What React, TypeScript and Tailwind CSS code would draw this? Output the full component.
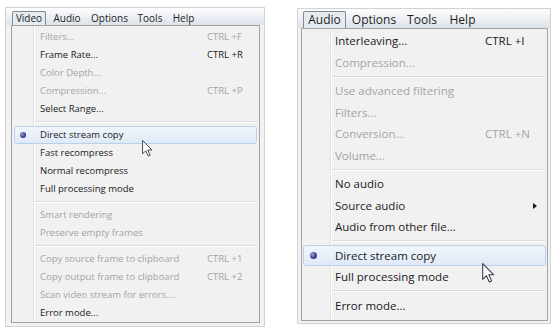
import React from "react";

type Item =
  | { type: "sep" }
  | { type: "item"; label: string; shortcut?: string; disabled?: boolean; checked?: boolean; highlight?: boolean; submenu?: boolean };

const leftItems: Item[] = [
  { type: "item", label: "Filters...", shortcut: "CTRL +F", disabled: true },
  { type: "item", label: "Frame Rate...", shortcut: "CTRL +R" },
  { type: "item", label: "Color Depth...", disabled: true },
  { type: "item", label: "Compression...", shortcut: "CTRL +P", disabled: true },
  { type: "item", label: "Select Range..." },
  { type: "sep" },
  { type: "item", label: "Direct stream copy", checked: true, highlight: true },
  { type: "item", label: "Fast recompress" },
  { type: "item", label: "Normal recompress" },
  { type: "item", label: "Full processing mode" },
  { type: "sep" },
  { type: "item", label: "Smart rendering", disabled: true },
  { type: "item", label: "Preserve empty frames", disabled: true },
  { type: "sep" },
  { type: "item", label: "Copy source frame to clipboard", shortcut: "CTRL +1", disabled: true },
  { type: "item", label: "Copy output frame to clipboard", shortcut: "CTRL +2", disabled: true },
  { type: "item", label: "Scan video stream for errors....", disabled: true },
  { type: "item", label: "Error mode..." },
];

const rightItems: Item[] = [
  { type: "item", label: "Interleaving...", shortcut: "CTRL +I" },
  { type: "item", label: "Compression...", disabled: true },
  { type: "sep" },
  { type: "item", label: "Use advanced filtering", disabled: true },
  { type: "item", label: "Filters...", disabled: true },
  { type: "item", label: "Conversion...", shortcut: "CTRL +N", disabled: true },
  { type: "item", label: "Volume...", disabled: true },
  { type: "sep" },
  { type: "item", label: "No audio" },
  { type: "item", label: "Source audio", submenu: true },
  { type: "item", label: "Audio from other file..." },
  { type: "sep" },
  { type: "item", label: "Direct stream copy", checked: true, highlight: true },
  { type: "item", label: "Full processing mode" },
  { type: "sep" },
  { type: "item", label: "Error mode..." },
];

function Cursor({ className }: { className: string }) {
  return (
    <svg className={className} viewBox="0 0 12 19" fill="none">
      <path d="M0.5 0.5 L0.5 15.5 L4 12 L6.8 18 L9 17 L6.3 11.2 L11 11.2 Z" fill="#ffffff" stroke="#333a44" strokeWidth="1" strokeLinejoin="round" />
    </svg>
  );
}

function Bullet({ className }: { className: string }) {
  return (
    <span
      className={className}
      style={{ background: "radial-gradient(circle at 35% 35%, #9aa0d8 0%, #3c4393 55%, #262a66 100%)" }}
    />
  );
}

function LeftMenu() {
  return (
    <div className="flex flex-col w-[260px] h-[320px] border border-[#d3d3d3] bg-[#f2f2f2] shrink-0">
      <div className="h-[17px] flex items-end pl-[6px] text-[10px] text-[#1e1e1e] bg-gradient-to-b from-[#fdfdfe] to-[#dde3ea]">
        <div className="h-[14px] w-[34px] justify-center flex items-center border border-b-0 border-[#7f8b97] rounded-t-[2px] bg-[#e6ebf0]">Video</div>
        <div className="h-[14px] w-[42px] justify-center flex items-center">Audio</div>
        <div className="h-[14px] w-[43px] justify-center flex items-center">Options</div>
        <div className="h-[14px] w-[38px] justify-center flex items-center">Tools</div>
        <div className="h-[14px] w-[29px] justify-center flex items-center">Help</div>
      </div>
      <div className="relative flex-1 ml-[5px] mr-[4px] mb-[3px] border border-[#a2a2a2] bg-[#f1f1f1] pt-[2px] flex flex-col text-[9.5px]">
        <div className="absolute top-0 bottom-0 left-[21px] w-[2px] border-l border-[#e2e2e2] border-r border-r-[#ffffff]" />
        {leftItems.map((it, i) =>
          it.type === "sep" ? (
            <div key={i} className="relative h-[8px] flex items-center ml-[23px] mr-[1px]">
              <div className="w-full h-[2px] border-t border-[#dcdcdc] border-b border-b-[#ffffff]" />
            </div>
          ) : (
            <div
              key={i}
              className={`relative mx-[2px] h-[18px] flex items-center pl-[25px] rounded-[3px] border ${
                it.highlight
                  ? "border-[#b9d1ec] bg-gradient-to-b from-[#f1f6fc] to-[#dfe9f6]"
                  : "border-transparent"
              } ${it.disabled ? "text-[#a4a4a4]" : "text-[#1a1a1a]"}`}
            >
              {it.checked && <Bullet className="absolute left-[5px] top-[5px] w-[6px] h-[6px] rounded-full" />}
              <span className="w-[167px] whitespace-nowrap">{it.label}</span>
              {it.shortcut && <span className="whitespace-nowrap">{it.shortcut}</span>}
            </div>
          )
        )}
        <Cursor className="absolute left-[130px] top-[114px] w-[11px] h-[17px]" />
      </div>
    </div>
  );
}

function RightMenu() {
  return (
    <div className="flex flex-col w-[254px] h-[316px] border border-[#d3d3d3] bg-[#f2f2f2] shrink-0 mt-[1px] ml-[32px]">
      <div className="h-[19px] flex items-end pl-[5px] text-[12px] text-[#1e1e1e] bg-gradient-to-b from-[#fdfdfe] to-[#dde3ea]">
        <div className="h-[17px] w-[43px] justify-center flex items-center border border-b-0 border-[#7f8b97] rounded-t-[2px] bg-[#e6ebf0]">Audio</div>
        <div className="h-[17px] w-[56px] justify-center flex items-center">Options</div>
        <div className="h-[17px] w-[40px] justify-center flex items-center">Tools</div>
        <div className="h-[17px] w-[41px] justify-center flex items-center">Help</div>
      </div>
      <div className="relative flex-1 ml-[3px] mr-[2px] mb-[2px] border border-[#a2a2a2] bg-[#f1f1f1] pt-[1px] flex flex-col text-[11.5px]">
        <div className="absolute top-0 bottom-0 left-[28px] w-[2px] border-l border-[#e2e2e2] border-r border-r-[#ffffff]" />
        {rightItems.map((it, i) =>
          it.type === "sep" ? (
            <div key={i} className="relative h-[7px] flex items-center ml-[30px] mr-[1px]">
              <div className="w-full h-[2px] border-t border-[#dcdcdc] border-b border-b-[#ffffff]" />
            </div>
          ) : (
            <div
              key={i}
              className={`relative mx-[1px] h-[21.5px] flex items-center pl-[31px] rounded-[3px] border ${
                it.highlight
                  ? "border-[#b9d1ec] bg-gradient-to-b from-[#f1f6fc] to-[#dfe9f6]"
                  : "border-transparent"
              } ${it.disabled ? "text-[#a4a4a4]" : "text-[#1a1a1a]"}`}
            >
              {it.checked && <Bullet className="absolute left-[6px] top-[6px] w-[7px] h-[7px] rounded-full" />}
              <span className="w-[150px] whitespace-nowrap">{it.label}</span>
              {it.shortcut && <span className="whitespace-nowrap">{it.shortcut}</span>}
              {it.submenu && (
                <span className="absolute right-[8px] top-[7px] w-0 h-0 border-t-[3.5px] border-b-[3.5px] border-l-[4px] border-t-transparent border-b-transparent border-l-[#1a1a1a]" />
              )}
            </div>
          )
        )}
        <Cursor className="absolute left-[180px] top-[234px] w-[13px] h-[20px]" />
      </div>
    </div>
  );
}

export default function App() {
  return (
    <div
      className="w-[560px] h-[334px] bg-white flex items-start pl-[5px] pt-[7px] overflow-hidden"
      style={{ fontFamily: '"Open Sans", "Noto Sans", sans-serif' }}
    >
      <LeftMenu />
      <RightMenu />
    </div>
  );
}
